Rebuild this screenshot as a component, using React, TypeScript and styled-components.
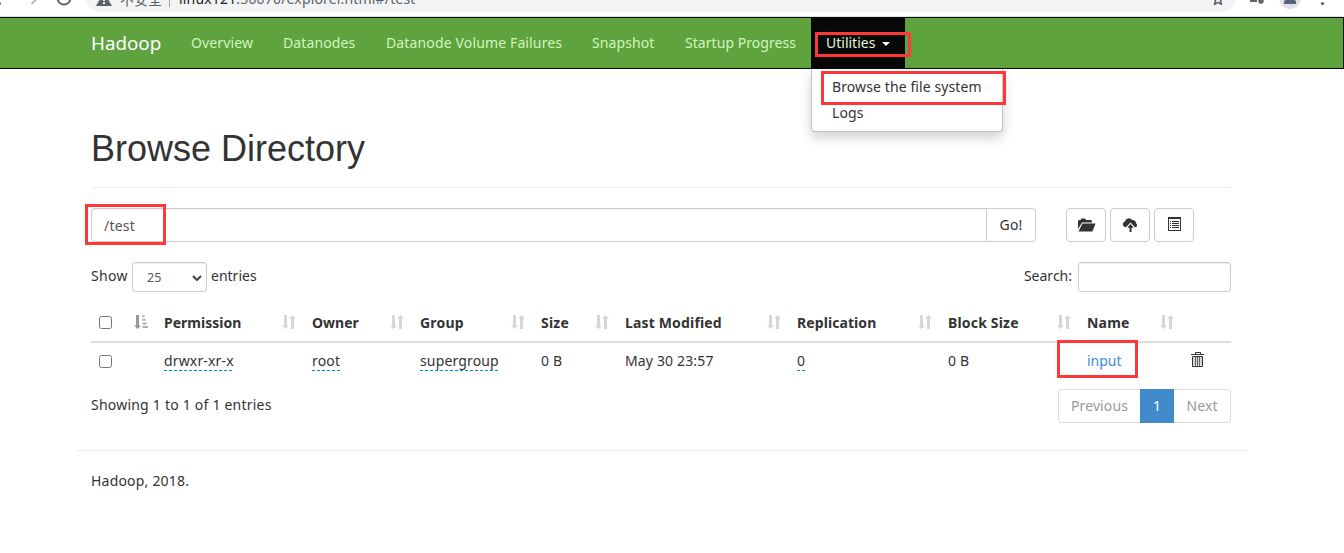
import styled, { createGlobalStyle } from "styled-components";

const GlobalStyle = createGlobalStyle`
  * {
    box-sizing: border-box;
  }
  body {
    margin: 0;
    background: #fff;
    color: #333;
    font-family: "Noto Sans", "Open Sans", "Noto Sans CJK SC", sans-serif;
    font-size: 14px;
    line-height: 20px;
    overflow: hidden;
  }
`;

const Page = styled.div`
  position: relative;
  height: 553px;
  overflow: hidden;
`;

/* browser toolbar */
const BrowserBar = styled.div`
  display: flex;
  align-items: flex-end;
  height: 17px;
  border-bottom: 1px solid #dee1e6;
  overflow: hidden;
`;

const BarIcons = styled.svg`
  flex: none;
  height: 16px;
`;

const AddressBar = styled.div`
  display: flex;
  align-items: center;
  flex: none;
  width: 1150px;
  height: 28px;
  margin-bottom: 4px;
  padding: 2px 12px 0 10px;
  border-radius: 14px;
  background: #f1f3f4;
  color: #5f6368;
  font-size: 14px;
  white-space: pre;
`;

const Security = styled.span`
  margin-left: 8px;
  padding-right: 7px;
  border-right: 1px solid #9aa0a6;
  line-height: 16px;
  font-family: "Noto Sans CJK SC", sans-serif;
`;

const Url = styled.span`
  flex: 1;
  margin-left: 9px;
  letter-spacing: 0.17px;
  b {
    font-weight: 400;
    color: #202124;
  }
`;

/* navigation */
const Navbar = styled.nav`
  height: 52px;
  padding-left: 76px;
  display: flex;
  background: #5fa33e;
  border: 1px solid #080808;
  border-left: 0;
`;

const Brand = styled.a`
  padding: 15px;
  width: 115px;
  margin-right: -15px;
  font-size: 18.8px;
  color: #fff;
  white-space: nowrap;
`;

const NavLink = styled.a<{ $width: number; $spacing?: number; $active?: boolean }>`
  width: ${({ $width }) => $width}px;
  padding: 15px;
  letter-spacing: ${({ $spacing }) => $spacing ?? 0}px;
  color: ${({ $active }) => ($active ? "#e4f7d9" : "#d2f5be")};
  background: ${({ $active }) => ($active ? "#080808" : "transparent")};
  white-space: nowrap;
`;

const NavItem = styled.div`
  position: relative;
`;

const Caret = styled.span`
  display: inline-block;
  margin-left: 7px;
  vertical-align: middle;
  border-top: 4px solid #fff;
  border-left: 4px solid transparent;
  border-right: 4px solid transparent;
`;

const Dropdown = styled.div`
  position: absolute;
  top: 51px;
  left: 0;
  width: 192px;
  height: 63px;
  padding: 5px 0;
  background: #fff;
  border: 1px solid #c4c4c4;
  border-top: 0;
  border-radius: 0 0 4px 4px;
  box-shadow: 0 6px 12px rgba(0, 0, 0, 0.175);
`;

const DropdownItem = styled.a`
  display: block;
  padding: 3px 20px;
  letter-spacing: 0.1px;
  white-space: nowrap;
`;

/* page body */
const Container = styled.main`
  width: 1170px;
  margin-left: 76px;
  padding: 0 15px;
`;

const Header = styled.header`
  height: 119px;
  padding-top: 60px;
  border-bottom: 1px solid #eee;
`;

const Title = styled.h1`
  margin: 0;
  font-family: "Liberation Sans", sans-serif;
  font-size: 36px;
  font-weight: 500;
  line-height: 40px;
`;

const PathRow = styled.div`
  display: flex;
  margin-top: 20px;
`;

const PathInput = styled.div`
  width: 896px;
  height: 34px;
  padding: 7px 12px;
  border: 1px solid #ccc;
  border-radius: 4px 0 0 4px;
  box-shadow: inset 0 1px 1px rgba(0, 0, 0, 0.075);
  color: #555;
  letter-spacing: 0.2px;
`;

const Button = styled.button<{ $joined?: boolean }>`
  display: flex;
  align-items: center;
  justify-content: center;
  width: ${({ $joined }) => ($joined ? 50 : 40)}px;
  height: 34px;
  margin-left: ${({ $joined }) => ($joined ? -1 : 0)}px;
  padding: 0;
  background: #fff;
  border: 1px solid #ccc;
  border-radius: ${({ $joined }) => ($joined ? "0 4px 4px 0" : "4px")};
  color: #333;
  font: inherit;
  letter-spacing: 0.2px;
`;

const Actions = styled.div`
  display: flex;
  gap: 4px;
  margin-left: 30px;
`;

const Controls = styled.div`
  display: flex;
  justify-content: space-between;
  margin-top: 20px;
  height: 30px;
`;

const Label = styled.label`
  display: flex;
  line-height: 28px;
`;

const LabelText = styled.span<{ $width?: number }>`
  width: ${({ $width }) => ($width ? `${$width}px` : "auto")};
  letter-spacing: ${({ $width }) => ($width ? 0.3 : 0)}px;
`;

const Select = styled.div`
  display: flex;
  align-items: center;
  justify-content: space-between;
  width: 75px;
  height: 30px;
  margin-right: 4px;
  padding: 1px 4px 0 14px;
  border: 1px solid #ccc;
  border-radius: 3px;
  box-shadow: inset 0 1px 1px rgba(0, 0, 0, 0.075);
  color: #555;
  font-size: 12.5px;
`;

const SearchInput = styled.input`
  width: 153px;
  height: 30px;
  margin: 0 0 0 6px;
  border: 1px solid #ccc;
  border-radius: 3px;
  box-shadow: inset 0 1px 1px rgba(0, 0, 0, 0.075);
`;

const Table = styled.table`
  width: 1140px;
  margin-top: 12px;
  table-layout: fixed;
  border-collapse: separate;
  border-spacing: 0;
`;

const Th = styled.th<{ $width: number }>`
  width: ${({ $width }) => $width}px;
  height: 39px;
  padding: 0 8px;
  border-bottom: 2px solid #ddd;
  text-align: left;
  white-space: nowrap;
`;

const HeadCell = styled.div<{ $spacing?: number }>`
  display: flex;
  align-items: center;
  justify-content: space-between;
  height: 37px;
  letter-spacing: ${({ $spacing }) => $spacing ?? 0}px;

  svg {
    margin-top: -2px;
  }
`;

const Td = styled.td`
  height: 37px;
  padding: 8px 8px 0;
  letter-spacing: 0.15px;
  vertical-align: top;
  white-space: nowrap;
`;

const Checkbox = styled.input`
  display: block;
  width: 13px;
  height: 13px;
  margin: 0;

  td & {
    margin-top: 4px;
  }
`;

const Editable = styled.span`
  display: inline-block;
  line-height: 20px;
  background: repeating-linear-gradient(
      to right,
      #0088cc 0 3px,
      transparent 3px 5px
    )
    left bottom / 100% 1px no-repeat;
`;

const NameLink = styled.a`
  color: #428bca;
  letter-spacing: 0;
`;

const Summary = styled.div`
  display: flex;
  justify-content: space-between;
  margin-top: 9px;
  line-height: 32px;
  letter-spacing: 0.22px;
`;

const Pager = styled.div`
  display: flex;
  letter-spacing: 0.1px;
`;

const PageButton = styled.a<{ $width: number; $active?: boolean; $side?: "left" | "right" }>`
  width: ${({ $width }) => $width}px;
  height: 34px;
  border: 1px solid ${({ $active }) => ($active ? "#428bca" : "#ddd")};
  border-left-width: ${({ $side }) => ($side === "right" ? 0 : 1)}px;
  border-right-width: ${({ $side }) => ($side === "left" ? 0 : 1)}px;
  border-radius: ${({ $side }) =>
    $side === "left" ? "4px 0 0 4px" : $side === "right" ? "0 4px 4px 0" : "0"};
  background: ${({ $active }) => ($active ? "#428bca" : "#fff")};
  color: ${({ $active }) => ($active ? "#fff" : "#999")};
  text-align: center;
`;

const Footer = styled.footer`
  margin: 27px -15px 0;
  padding: 20px 15px;
  border-top: 1px solid #eee;
  letter-spacing: 0.2px;
`;

const Highlight = styled.div<{ $x: number; $y: number; $w: number; $h: number }>`
  position: absolute;
  left: ${({ $x }) => $x}px;
  top: ${({ $y }) => $y}px;
  width: ${({ $w }) => $w}px;
  height: ${({ $h }) => $h}px;
  border: 3px solid #ff3737;
  pointer-events: none;
`;

const SortIcon = () => (
  <svg width="14" height="14" viewBox="0 0 14 14" fill="#d6d6d6">
    <path d="M2 0h3v10.500h2L3.500 14 0 10.500h2z M9 14h3V3.500h2L10.500 0 7 3.500h2z" />
  </svg>
);

const SortAscIcon = () => (
  <svg width="14" height="14" viewBox="0 0 14 14" fill="#999">
    <path d="M2 0h3v10.500h2L3.500 14 0 10.500h2z" />
    <path d="M8.500 0h2v2h-2z M8.500 3.700h3v2h-3z M8.500 7.400h4v2h-4z M8.500 11h5.500v2H8.500z" fillOpacity="0.8" />
  </svg>
);

const FolderIcon = () => (
  <svg width="20" height="14" viewBox="0 0 20 14" fill="#333">
    <path d="M2 11V3l1-1h1.500l1-1.500h3.500l1 1.500h5l1 1v1.500H6L4.500 7z" />
    <path d="M6.500 5.500H19.500L16.500 13.500H2.500z" />
  </svg>
);

const UploadIcon = () => (
  <svg width="16" height="16" viewBox="0 0 16 16" fill="#333">
    <path d="M2.500 10A3 3 0 0 1 2.800 4.500 4.200 4.200 0 0 1 10.200 3 3.600 3.600 0 0 1 14 6.200a2.300 2.300 0 0 1 .2 3.800h-1.400L8.500 5.600 4.200 10z" />
    <path d="M8.500 7l3.300 3.800H9.500V15h-2v-4.200H5.200z" />
  </svg>
);

const ListIcon = () => (
  <svg width="16" height="16" viewBox="0 0 16 16" fill="#333">
    <path fillRule="evenodd" d="M2 0h13v14H2z M3 2v11h11V2z" />
    <path d="M4 4h1v1H4z M6 4h7v1H6z M4 6h1v1H4z M6 6h7v1H6z M4 8h1v1H4z M6 8h7v1H6z M4 10h1v1H4z M6 10h7v1H6z" />
  </svg>
);

const TrashIcon = () => (
  <svg width="15" height="16" viewBox="0 0 15 16" fill="none" stroke="#333">
    <path d="M3 6h9v8H3z" fill="#d5d5d5" stroke="none" />
    <path d="M5.500 3V1.500h5V3 M1 3.500h13 M2.500 5.500v10h10v-10z" />
    <path d="M5.500 6v9 M7.500 6v9 M9.500 6v9" stroke="#666" />
  </svg>
);

const navLinks = [
  { label: "Overview", width: 92, spacing: 0.12 },
  { label: "Datanodes", width: 103, spacing: 0.1 },
  { label: "Datanode Volume Failures", width: 206, spacing: 0.14 },
  { label: "Snapshot", width: 93, spacing: 0.1 },
  { label: "Startup Progress", width: 141, spacing: 0.05 },
];

const columns = [
  { label: "Permission", width: 148 },
  { label: "Owner", width: 108 },
  { label: "Group", width: 121, spacing: 0.2 },
  { label: "Size", width: 84, spacing: 0.2 },
  { label: "Last Modified", width: 172, spacing: 0.16 },
  { label: "Replication", width: 151, spacing: 0.08 },
  { label: "Block Size", width: 139, spacing: 0.18 },
  { label: "Name", width: 103, spacing: 0.2 },
];

const highlights = [
  { x: 815, y: 32, w: 96, h: 25 },
  { x: 821, y: 71, w: 185, h: 34 },
  { x: 85, y: 204, w: 81, h: 41 },
  { x: 1057, y: 340, w: 81, h: 38 },
];

const App = () => {
  return (
    <Page>
      <GlobalStyle />
      <BrowserBar>
        <BarIcons width="86" viewBox="0 0 86 16" fill="none" strokeWidth="2">
          <path d="M0 3.500h1" stroke="#5f6368" />
          <path d="M31.500 4l5-5" stroke="#babcbe" />
          <path d="M57.500-2a6.500 6.500 0 0 0 13 0" stroke="#5f6368" />
        </BarIcons>
        <AddressBar>
          <svg width="16" height="14" viewBox="0 0 16 14">
            <path d="M8 0l8 14H0z" fill="#5f6368" />
            <path d="M8 5v4M8 10v2" stroke="#f1f3f4" strokeWidth="2" />
          </svg>
          <Security>不安全</Security>
          <Url>
            <b>linux121</b>:50070/explorer.html#/test
          </Url>
          <svg width="12" height="12" viewBox="0 0 12 12" fill="none" stroke="#5f6368" strokeWidth="1.500">
            <path d="M6 1l1.500 3.500 4 .3-3 2.700 1 4L6 9.300l-3.500 2.200 1-4-3-2.700 4-.3z" />
          </svg>
        </AddressBar>
        <BarIcons width="108" viewBox="1236 0 108 16">
          <path d="M1250 0h7v2h-7z" fill="#5f6368" />
          <circle cx="1261" cy="1" r="2.700" fill="#5f6368" />
          <circle cx="1290" cy="-2" r="11" fill="#dee1e6" />
          <path d="M1284 4V1q6-4 12 0v3z" fill="#56637a" />
          <circle cx="1322.500" cy="3.500" r="1.600" fill="#5f6368" />
        </BarIcons>
      </BrowserBar>
      <Navbar>
        <Brand>Hadoop</Brand>
        {navLinks.map(({ label, width, spacing }) => (
          <NavLink key={label} $width={width} $spacing={spacing}>
            {label}
          </NavLink>
        ))}
        <NavItem>
          <NavLink as="div" $width={94} $active>
            Utilities
            <Caret />
          </NavLink>
          <Dropdown>
            <DropdownItem>Browse the file system</DropdownItem>
            <DropdownItem>Logs</DropdownItem>
          </Dropdown>
        </NavItem>
      </Navbar>
      <Container>
        <Header>
          <Title>Browse Directory</Title>
        </Header>
        <PathRow>
          <PathInput>/test</PathInput>
          <Button $joined>Go!</Button>
          <Actions>
            <Button>
              <FolderIcon />
            </Button>
            <Button>
              <UploadIcon />
            </Button>
            <Button>
              <ListIcon />
            </Button>
          </Actions>
        </PathRow>
        <Controls>
          <Label>
            <LabelText $width={41}>Show</LabelText>
            <Select>
              25
              <svg width="10" height="6" viewBox="0 0 10 6" fill="none" stroke="#444" strokeWidth="2">
                <path d="M1 1l4 4 4-4" />
              </svg>
            </Select>
            <LabelText>entries</LabelText>
          </Label>
          <Label>
            <LabelText>Search:</LabelText>
            <SearchInput />
          </Label>
        </Controls>
        <Table>
          <thead>
            <tr>
              <Th $width={65}>
                <HeadCell>
                  <Checkbox type="checkbox" />
                  <SortAscIcon />
                </HeadCell>
              </Th>
              {columns.map(({ label, width, spacing }) => (
                <Th key={label} $width={width}>
                  <HeadCell $spacing={spacing}>
                    {label}
                    <SortIcon />
                  </HeadCell>
                </Th>
              ))}
              <Th $width={49} />
            </tr>
          </thead>
          <tbody>
            <tr>
              <Td>
                <Checkbox type="checkbox" />
              </Td>
              <Td>
                <Editable>drwxr-xr-x</Editable>
              </Td>
              <Td>
                <Editable>root</Editable>
              </Td>
              <Td>
                <Editable>supergroup</Editable>
              </Td>
              <Td>0 B</Td>
              <Td>May 30 23:57</Td>
              <Td>
                <Editable>0</Editable>
              </Td>
              <Td>0 B</Td>
              <Td>
                <NameLink>input</NameLink>
              </Td>
              <Td>
                <TrashIcon />
              </Td>
            </tr>
          </tbody>
        </Table>
        <Summary>
          Showing 1 to 1 of 1 entries
          <Pager>
            <PageButton $width={82} $side="left">
              Previous
            </PageButton>
            <PageButton $width={34} $active>
              1
            </PageButton>
            <PageButton $width={57} $side="right">
              Next
            </PageButton>
          </Pager>
        </Summary>
        <Footer>Hadoop, 2018.</Footer>
      </Container>
      {highlights.map(({ x, y, w, h }) => (
        <Highlight key={x} $x={x} $y={y} $w={w} $h={h} />
      ))}
    </Page>
  );
};

export default App;
